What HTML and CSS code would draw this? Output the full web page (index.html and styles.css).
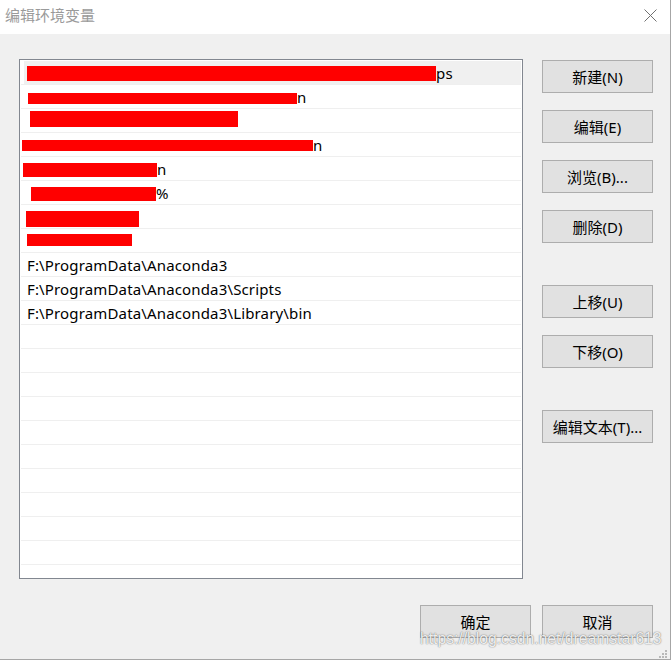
FILE: index.html
```html
<!DOCTYPE html>
<html lang="zh-CN">
<head>
<meta charset="utf-8">
<title>编辑环境变量</title>
<link rel="stylesheet" href="styles.css">
</head>
<body>
<div class="window">
  <div class="titlebar">
    <span class="title">编辑环境变量</span>
    <span class="close">
      <svg width="13" height="13" viewBox="0 0 13 13"><path d="M0.5 0.5 L12.5 12.5 M12.5 0.5 L0.5 12.5" stroke="#707070" stroke-width="1" fill="none"/></svg>
    </span>
  </div>
  <div class="content">
    <div class="main">
      <div class="list">
        <div class="row sel"><span class="redact r1"></span>ps</div>
        <div class="row"><span class="redact r2"></span>n</div>
        <div class="row"><span class="redact r3"></span></div>
        <div class="row"><span class="redact r4"></span>n</div>
        <div class="row"><span class="redact r5"></span>n</div>
        <div class="row"><span class="redact r6"></span>%</div>
        <div class="row"><span class="redact r7"></span></div>
        <div class="row"><span class="redact r8"></span></div>
        <div class="row">F:\ProgramData\Anaconda3</div>
        <div class="row">F:\ProgramData\Anaconda3\Scripts</div>
        <div class="row">F:\ProgramData\Anaconda3\Library\bin</div>
        <div class="row"></div>
        <div class="row"></div>
        <div class="row"></div>
        <div class="row"></div>
        <div class="row"></div>
        <div class="row"></div>
        <div class="row"></div>
        <div class="row"></div>
        <div class="row"></div>
        <div class="row"></div>
        <div class="row"></div>
      </div>
      <div class="side">
        <div class="btn">新建(N)</div>
        <div class="btn">编辑(E)</div>
        <div class="btn">浏览(B)...</div>
        <div class="btn">删除(D)</div>
        <div class="btn sep">上移(U)</div>
        <div class="btn">下移(O)</div>
        <div class="btn sep">编辑文本(T)...</div>
      </div>
    </div>
    <div class="footer">
      <div class="btn">确定</div>
      <div class="btn">取消</div>
    </div>
    <div class="watermark">https://blog.csdn.net/dreamstar613</div>
    <div class="grip">
      <svg width="11" height="9" viewBox="0 0 11 9">
        <rect x="8" y="0" width="2" height="2" fill="#b8b8b8"/>
        <rect x="5" y="3" width="2" height="2" fill="#b8b8b8"/>
        <rect x="8" y="3" width="2" height="2" fill="#b8b8b8"/>
        <rect x="2" y="6" width="2" height="2" fill="#b8b8b8"/>
        <rect x="5" y="6" width="2" height="2" fill="#b8b8b8"/>
        <rect x="8" y="6" width="2" height="2" fill="#b8b8b8"/>
      </svg>
    </div>
  </div>
</div>
</body>
</html>
```
FILE: styles.css
```css
html, body {
  margin: 0;
  padding: 0;
  background: #ffffff;
}
body {
  font-family: "Noto Sans", "Noto Sans CJK SC", sans-serif;
  font-size: 15px;
  color: #000;
}
.window {
  box-sizing: border-box;
  width: 671px;
  height: 660px;
  border-right: 1px solid #a6a6a6;
  border-bottom: 1px solid #a6a6a6;
  display: flex;
  flex-direction: column;
}
.titlebar {
  height: 34px;
  flex: none;
  background: #fff;
  display: flex;
  justify-content: space-between;
  align-items: flex-start;
}
.title {
  padding-left: 5px;
  line-height: 30px;
  color: #9a9a9a;
  font-family: "Noto Sans CJK SC", sans-serif;
}
.close {
  padding-top: 9px;
  padding-right: 13px;
  line-height: 0;
}
.content {
  flex: 1;
  background: #f0f0f0;
  position: relative;
}
.main {
  display: flex;
  gap: 19px;
  padding-top: 25px;
  padding-left: 19px;
}
.list {
  box-sizing: border-box;
  width: 504px;
  height: 520px;
  border: 1px solid #828790;
  background: #fff;
  overflow: hidden;
}
.row {
  box-sizing: border-box;
  height: 24px;
  margin-left: 1px;
  margin-right: 1px;
  padding-left: 6px;
  border-top: 1px solid #efefef;
  line-height: 24px;
  letter-spacing: 0.15px;
  white-space: nowrap;
  overflow: hidden;
}
.row.sel {
  border-top-color: #fff;
  background: linear-gradient(#f0f0f0, #f0f0f0) 3px 0 / calc(100% - 3px) 100% no-repeat;
}
.redact {
  display: inline-block;
  vertical-align: top;
  background: #ff0000;
}
.r1 { width: 409px; height: 15px; margin-top: 5px; }
.r2 { width: 269px; height: 11px; margin-top: 8px; margin-left: 1px; }
.r3 { width: 208px; height: 16px; margin-top: 2px; margin-left: 3px; }
.r4 { width: 291px; height: 11px; margin-top: 7px; margin-left: -5px; }
.r5 { width: 134px; height: 14px; margin-top: 6px; margin-left: -4px; }
.r6 { width: 125px; height: 14px; margin-top: 6px; margin-left: 4px; }
.r7 { width: 113px; height: 16px; margin-top: 6px; margin-left: -1px; }
.r8 { width: 105px; height: 12px; margin-top: 5px; }
.side {
  display: flex;
  flex-direction: column;
  gap: 17px;
  margin-top: 1px;
}
.btn {
  box-sizing: border-box;
  width: 111px;
  height: 33px;
  border: 1px solid #adadad;
  background: #e1e1e1;
  display: flex;
  align-items: center;
  justify-content: center;
  white-space: nowrap;
}
.btn.sep {
  margin-top: 25px;
}
.footer {
  display: flex;
  justify-content: flex-end;
  gap: 11px;
  margin-top: 26px;
  padding-right: 17px;
}
.watermark {
  position: absolute;
  left: 420px;
  top: 596px;
  font-family: "Liberation Sans", sans-serif;
  font-size: 15.7px;
  line-height: 18px;
  color: rgba(255, 255, 255, 0.9);
  text-shadow: 0 0 1px rgba(0, 0, 0, 0.5), 0 0 2px rgba(0, 0, 0, 0.25);
  white-space: nowrap;
}
.grip {
  position: absolute;
  right: 2px;
  bottom: 0;
  line-height: 0;
}
```
